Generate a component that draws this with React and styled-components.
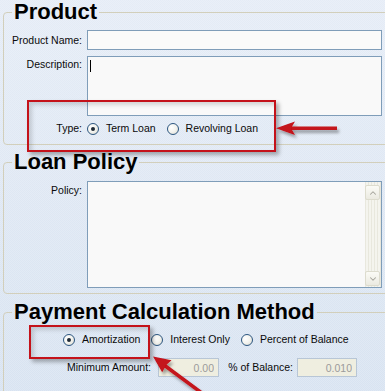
import React from 'react';
import styled, { createGlobalStyle } from 'styled-components';
import { ChevronUp, ChevronDown } from 'lucide-react';

const GlobalStyle = createGlobalStyle`
  html, body {
    margin: 0;
    padding: 0;
  }
  body {
    width: 385px;
    height: 391px;
    overflow: hidden;
    font-family: "Liberation Sans", Arial, sans-serif;
    background-color: #dee8f4;
    background-image:
      repeating-conic-gradient(rgba(255,255,255,0.18) 0 25%, transparent 0 50%),
      linear-gradient(180deg, #e5ecf6 0%, #d8e3f1 100%);
    background-size: 2px 2px, 100% 100%;
  }
`;

const Page = styled.div`
  position: relative;
  width: 385px;
  height: 391px;
  overflow: hidden;
  font-size: 10.5px;
  color: #0a0a0a;
`;

const Group = styled.fieldset`
  margin: ${p => p.$mt || 0}px 0 0 3px;
  padding: ${p => p.$pt}px 0 ${p => p.$pb}px 0;
  width: 400px;
  min-width: 0;
  box-sizing: border-box;
  border: 1px solid #d2cfbb;
  border-radius: 4px;
`;

const Legend = styled.legend`
  margin-left: 8px;
  padding: 0 2px;
  font-size: 22px;
  line-height: 24px;
  font-weight: bold;
  color: #000;
`;

const Row = styled.div`
  display: flex;
  align-items: ${p => (p.$top ? 'flex-start' : 'center')};
  margin-top: ${p => p.$mt || 0}px;
  padding-left: ${p => p.$pl || 0}px;
`;

const Label = styled.label`
  flex-shrink: 0;
  width: ${p => p.$w || 78}px;
  margin-right: ${p => (p.$mr === undefined ? 5 : p.$mr)}px;
  margin-left: ${p => p.$ml || 0}px;
  padding-top: ${p => p.$pt || 0}px;
  text-align: right;
  line-height: 13px;
  white-space: nowrap;
`;

const TextInput = styled.input`
  width: 295px;
  height: 20px;
  box-sizing: border-box;
  margin: 0;
  padding: 0 3px;
  border: 1px solid #7f9db9;
  background: #fafafa;
  font: inherit;
  outline: none;
`;

const TextArea = styled.div`
  display: flex;
  width: 295px;
  height: ${p => p.$h}px;
  box-sizing: border-box;
  border: 1px solid #7f9db9;
  background: #f9f9f9;
`;

const TextContent = styled.div`
  flex: 1;
  padding: 3px 2px;
`;

const Caret = styled.span`
  display: block;
  width: 1px;
  height: 12px;
  background: #000;
`;

const ScrollBar = styled.div`
  width: 16px;
  padding: 3px 0 1px;
  display: flex;
  flex-direction: column;
  justify-content: space-between;
  background-color: #f4f4ee;
  background-image: repeating-linear-gradient(90deg, rgba(210,208,190,0.35) 0 1px, transparent 1px 3px);
`;

const ScrollButton = styled.div`
  width: 15px;
  height: 15px;
  box-sizing: border-box;
  border: 1px solid #dddcce;
  border-radius: 2px;
  background: linear-gradient(180deg, #fbfbf6 0%, #ebeae1 100%);
  display: flex;
  align-items: center;
  justify-content: center;
  color: #a4a39a;
`;

const Options = styled.div`
  display: flex;
  align-items: center;
`;

const Option = styled.label`
  display: inline-flex;
  align-items: center;
  line-height: 13px;
  margin-right: ${p => p.$mr || 0}px;
  white-space: nowrap;
`;

const Radio = styled.span`
  width: 12px;
  height: 12px;
  box-sizing: border-box;
  border-radius: 50%;
  border: 1px solid #2c5680;
  background: radial-gradient(circle at 35% 35%, #ffffff 0%, #f3f3ee 50%, #d6d6cc 100%);
  display: inline-flex;
  align-items: center;
  justify-content: center;
  margin-right: 7px;

  &::after {
    content: '';
    width: 4px;
    height: 4px;
    border-radius: 50%;
    background: ${p => (p.$checked ? '#1e2a36' : 'transparent')};
  }
`;

const NumberInput = styled.input`
  width: ${p => p.$w}px;
  height: 19px;
  box-sizing: border-box;
  margin: 0;
  padding: 0 4px 0 0;
  border: 1px solid #b8c6d6;
  background: #efeee0;
  color: #9b9b9b;
  font: inherit;
  text-align: right;
`;

const Callout = styled.div`
  position: absolute;
  left: ${p => p.$x}px;
  top: ${p => p.$y}px;
  width: ${p => p.$w}px;
  height: ${p => p.$h}px;
  box-sizing: border-box;
  border: 2px solid #c4121a;
  box-shadow: 3px 3px 4px rgba(0, 0, 0, 0.3), inset 3px 3px 4px rgba(0, 0, 0, 0.15);
  pointer-events: none;
`;

const ArrowLayer = styled.svg`
  position: absolute;
  left: 0;
  top: 0;
  pointer-events: none;
`;

const RadioOption = ({ checked, mr, children }) => (
  <Option $mr={mr}>
    <Radio $checked={checked} />
    {children}
  </Option>
);

export default function App() {
  return (
    <Page>
      <GlobalStyle />

      <Group $pt={6} $pb={9}>
        <Legend>Product</Legend>
        <Row>
          <Label>Product Name:</Label>
          <TextInput />
        </Row>
        <Row $top $mt={6}>
          <Label $pt={2}>Description:</Label>
          <TextArea $h={60}>
            <TextContent>
              <Caret />
            </TextContent>
          </TextArea>
        </Row>
        <Row $mt={6}>
          <Label>Type:</Label>
          <Options>
            <RadioOption checked mr={11}>Term Loan</RadioOption>
            <RadioOption>Revolving Loan</RadioOption>
          </Options>
        </Row>
      </Group>

      <Group $mt={5} $pt={7} $pb={5}>
        <Legend>Loan Policy</Legend>
        <Row $top>
          <Label $pt={3}>Policy:</Label>
          <TextArea $h={107}>
            <TextContent />
            <ScrollBar>
              <ScrollButton>
                <ChevronUp size={10} strokeWidth={2.5} />
              </ScrollButton>
              <ScrollButton>
                <ChevronDown size={10} strokeWidth={2.5} />
              </ScrollButton>
            </ScrollBar>
          </TextArea>
        </Row>
      </Group>

      <Group $mt={6} $pt={9} $pb={20}>
        <Legend>Payment Calculation Method</Legend>
        <Row $pl={59}>
          <RadioOption checked mr={11}>Amortization</RadioOption>
          <RadioOption mr={11}>Interest Only</RadioOption>
          <RadioOption>Percent of Balance</RadioOption>
        </Row>
        <Row $mt={12}>
          <Label $w={147} $mr={7}>Minimum Amount:</Label>
          <NumberInput $w={61} disabled value="0.00" readOnly />
          <Label $w={65} $ml={9} $mr={4}>% of Balance:</Label>
          <NumberInput $w={60} disabled value="0.010" readOnly />
        </Row>
      </Group>

      <Callout $x={27} $y={100} $w={249} $h={52} />
      <Callout $x={29} $y={325} $w={121} $h={34} />

      <ArrowLayer width="385" height="391" viewBox="0 0 385 391">
        <defs>
          <filter id="arrowShadow" x="-20%" y="-20%" width="140%" height="160%">
            <feDropShadow dx="2" dy="3" stdDeviation="1.5" floodColor="#000" floodOpacity="0.35" />
          </filter>
        </defs>
        <g filter="url(#arrowShadow)" fill="#c4121a" stroke="none">
          <rect x="290" y="126.5" width="47" height="3.5" />
          <polygon points="276,128.2 295,121.5 291,128.2 295,135" />
          <line x1="164" y1="365" x2="218" y2="405" stroke="#c4121a" strokeWidth="3.5" />
          <polygon points="153,356.5 171.5,360.2 166.2,364.9 162.2,372.3" />
        </g>
      </ArrowLayer>
    </Page>
  );
}
